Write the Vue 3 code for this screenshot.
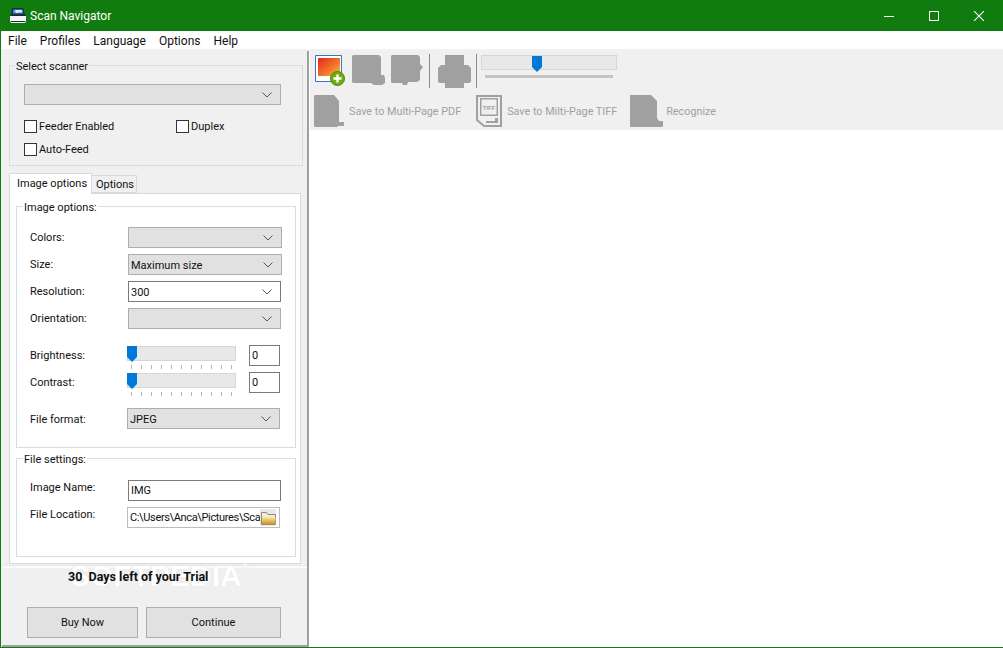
<script setup>
const menus = ['File', 'Profiles', 'Language', 'Options', 'Help']
const selects = [
  { label: 'Colors:', value: '', width: 154, active: false },
  { label: 'Size:', value: 'Maximum size', width: 154, active: false },
  { label: 'Resolution:', value: '300', width: 153, active: true },
  { label: 'Orientation:', value: '', width: 153, active: false }
]
const sliders = ['Brightness:', 'Contrast:']
const ticks = Array.from({ length: 11 }, (_, i) => i)
</script>

<template>
  <div class="window">
    <header class="titlebar">
      <svg class="appicon" width="16" height="15" viewBox="0 0 16 15">
        <path d="M2 0h11l2 7H1z" fill="#12304f" />
        <path d="M3.500 1.500h8.500l1 4H3z" fill="#5f97cc" />
        <path d="M5 2h7l.5 2L6 5z" fill="#d9ecfa" />
        <path d="M0 8h16v5l-1 2H1l-1-2z" fill="#f4f5f6" />
        <path d="M1 13h14v1H1z" fill="#1b2a3a" />
        <path d="M0 7h16v1H0z" fill="#1b2a3a" />
      </svg>
      <span class="apptitle">Scan Navigator</span>
      <div class="winctl">
        <svg width="10" height="10" viewBox="0 0 10 10"><path d="M0 5.500h10" stroke="#fff" /></svg>
        <svg width="10" height="10" viewBox="0 0 10 10"><path d="M.5.500h9v9h-9z" fill="none" stroke="#fff" /></svg>
        <svg width="10" height="10" viewBox="0 0 10 10"><path d="M0 0l10 10M10 0L0 10" stroke="#fff" stroke-width="1.100" /></svg>
      </div>
    </header>

    <nav class="menubar">
      <span v-for="m in menus" :key="m" class="menuitem">{{ m }}</span>
    </nav>

    <div class="body">
      <aside class="side">
        <div class="upper">
          <section class="group scanner">
            <span class="legend">Select scanner</span>
            <div class="select scanner-select">
              <span></span>
              <svg class="chev" width="10" height="6" viewBox="0 0 10 6"><path d="M.5.500L5 5 9.500.500" fill="none" stroke="#555" /></svg>
            </div>
            <div class="checks">
              <label class="check check-feeder"><i></i><span>Feeder Enabled</span></label>
              <label class="check"><i></i><span>Duplex</span></label>
            </div>
            <label class="check check-auto"><i></i><span>Auto-Feed</span></label>
          </section>

          <div class="tabs">
            <span class="tab on">Image options</span>
            <span class="tab">Options</span>
          </div>
          <div class="tabpanel">
            <section class="group image-group">
              <span class="legend">Image options:</span>
              <div v-for="s in selects" :key="s.label" class="row">
                <span class="lbl">{{ s.label }}</span>
                <div class="select" :class="{ live: s.active }" :style="{ width: s.width + 'px' }">
                  <span>{{ s.value }}</span>
                  <svg class="chev" width="10" height="6" viewBox="0 0 10 6"><path d="M.5.500L5 5 9.500.500" fill="none" stroke="#555" /></svg>
                </div>
              </div>

              <div class="sliders">
                <div v-for="s in sliders" :key="s" class="row">
                  <span class="lbl">{{ s }}</span>
                  <div class="slider">
                    <div class="track"></div>
                    <svg class="thumb" width="10" height="16" viewBox="0 0 10 16"><path d="M0 0h10v11l-5 5-5-5z" fill="#0078d7" /></svg>
                    <div class="ticks"><b v-for="t in ticks" :key="t"></b></div>
                  </div>
                  <div class="field num">0</div>
                </div>
              </div>

              <div class="row format">
                <span class="lbl">File format:</span>
                <div class="select nudge format-select">
                  <span>JPEG</span>
                  <svg class="chev" width="10" height="6" viewBox="0 0 10 6"><path d="M.5.500L5 5 9.500.500" fill="none" stroke="#555" /></svg>
                </div>
              </div>
            </section>

            <section class="group file-group">
              <span class="legend">File settings:</span>
              <div class="row">
                <span class="lbl">Image Name:</span>
                <div class="field name">IMG</div>
              </div>
              <div class="row">
                <span class="lbl">File Location:</span>
                <div class="field location nudge">
                  <span class="path">C:\Users\Anca\Pictures\Sca</span>
                  <span class="folderbtn">
                    <svg width="15" height="14" viewBox="0 0 15 14">
                      <defs>
                        <linearGradient id="fold" x1="0" y1="0" x2="0" y2="1">
                          <stop offset="0" stop-color="#fbe9a8" />
                          <stop offset="1" stop-color="#c98f1c" />
                        </linearGradient>
                      </defs>
                      <path d="M.5 1.500h5l1.500 2h7.500v10H.5z" fill="#f3eccd" stroke="#8b8b7a" />
                      <path d="M1 6h13.500v7.500H1z" fill="url(#fold)" />
                    </svg>
                  </span>
                </div>
              </div>
            </section>
          </div>
        </div>

        <div class="footer">
          <p class="trial">30&nbsp; Days left of your Trial</p>
          <div class="buttons">
            <span class="btn buy">Buy Now</span>
            <span class="btn cont">Continue</span>
          </div>
        </div>
      </aside>

      <main class="main">
        <div class="toolbar">
          <div class="tool-top">
            <svg class="newscan" width="30" height="31" viewBox="0 0 30 31">
              <defs>
                <linearGradient id="pic" x1="0" y1="0" x2="1" y2="1">
                  <stop offset="0" stop-color="#e6231e" />
                  <stop offset=".6" stop-color="#f27a2b" />
                  <stop offset="1" stop-color="#f9c24d" />
                </linearGradient>
              </defs>
              <path d="M.5.500h26v26H.5z" fill="#fff" stroke="#3a78b5" />
              <path d="M3 3h22v18H3z" fill="url(#pic)" />
              <circle cx="22.500" cy="23.500" r="7" fill="#6fae12" stroke="#4a850a" />
              <path d="M22.500 19.500v8M18.500 23.500h8" stroke="#fff" stroke-width="2.400" />
            </svg>
            <svg class="sil" width="33" height="31" viewBox="0 0 33 31"><path d="M1 0h26l2 2v18h3l1 3v5l-3 2h-8l-3-2H1l-1-1V1z" fill="#a0a0a0" /></svg>
            <svg class="sil s3" width="33" height="32" viewBox="0 0 33 32"><path d="M1 0h26l2 2v7l3 3-3 4v9l-3 2h-9l-1 3h-4l-1-2H1l-1-1V1z" fill="#a0a0a0" /></svg>
            <i class="sep"></i>
            <svg class="sil s4" width="33" height="33" viewBox="0 0 33 33"><path d="M7 0h19v10h4l3 3v14l-2 1h-5v5H7v-5H2l-2-1V13l3-3h4z" fill="#a0a0a0" /></svg>
            <i class="sep s5"></i>
            <div class="zoom">
              <div class="ztrack">
                <svg class="zthumb" width="10" height="16" viewBox="0 0 10 16"><path d="M0 0h10v11l-5 5-5-5z" fill="#0078d7" /></svg>
              </div>
              <div class="zbar"></div>
            </div>
          </div>
          <div class="tool-bottom">
            <span class="act a1">
              <svg width="30" height="32" viewBox="0 0 30 32"><path d="M1 0h19l5 6v21h5v4h-6l-1 1H1l-1-1V1z" fill="#a0a0a0" /></svg>
              <span class="acttxt">Save to Multi-Page PDF</span>
            </span>
            <span class="act a2">
              <svg width="26" height="32" viewBox="0 0 26 32">
                <path d="M1 1h24v30H8l-7-6z" fill="none" stroke="#a0a0a0" stroke-width="2" />
                <path d="M4.750 3.750h16.500v16.500H4.750z" fill="none" stroke="#a0a0a0" stroke-width="1.500" />
                <text x="13" y="14.500" text-anchor="middle" class="tifftxt">TIFF</text>
                <path d="M10 26h12v2H10z" fill="#a0a0a0" />
                <path d="M19 23h3v3h-3z" fill="#a0a0a0" />
              </svg>
              <span class="acttxt">Save to Milti-Page TIFF</span>
            </span>
            <span class="act a3">
              <svg width="33" height="32" viewBox="0 0 33 32"><path d="M0 0h21l6 6v17l2 3h4v5l-1 1H0z" fill="#a0a0a0" /></svg>
              <span class="acttxt">Recognize</span>
            </span>
          </div>
        </div>
      </main>
    </div>

    <span class="watermark">SOFTPEDIA<sup>®</sup></span>
  </div>
</template>

<style>
html, body { margin: 0; padding: 0; background: #fff; }
</style>

<style scoped>
* { box-sizing: border-box; }
.window {
  position: relative;
  width: 1003px;
  height: 648px;
  overflow: hidden;
  display: flex;
  flex-direction: column;
  background: #fff;
  border-left: 1px solid #107c10;
  border-bottom: 1px solid #107c10;
  font: 11px/16px Roboto, "Noto Sans", sans-serif;
  color: #111;
}
.titlebar {
  height: 31px;
  flex: none;
  margin-left: -1px;
  background: #107c10;
  color: #fff;
  display: flex;
  align-items: center;
  padding-left: 10px;
}
.appicon { margin-right: 4px; }
.apptitle { font-size: 12px; }
.winctl { margin-left: auto; display: flex; gap: 35px; padding-right: 19px; }
.menubar {
  height: 18px;
  flex: none;
  background: #fff;
  display: flex;
  padding: 2px 0 0 7px;
  align-items: center;
  gap: 13px;
  font-size: 12px;
}
.body { flex: 1; display: flex; min-height: 0; border-top: 2px solid #f2f2f2; }
.side {
  width: 308px;
  flex: none;
  background: #f0f0f0;
  border-right: 2px solid #a0a0a0;
  display: flex;
  flex-direction: column;
}
.upper { flex: 1; padding: 14px 4px 0 8px; min-height: 0; }
.group { position: relative; border: 1px solid #dcdcdc; }
.legend {
  position: absolute;
  top: -7px;
  left: 6px;
  padding: 0 1px;
  background: inherit;
  white-space: nowrap;
}
.scanner { height: 101px; width: 294px; padding: 18px 0 0 14px; background: #f0f0f0; }
.scanner .legend { left: 5px; }
.select {
  height: 21px;
  display: flex;
  align-items: center;
  justify-content: space-between;
  padding: 0 8px 0 2px;
  background: #e1e1e1;
  border: 1px solid #adadad;
  flex: none;
}
.select > span { padding-top: 2px; }
.select.live { background: #fff; border-color: #7a7a7a; }
.scanner-select { width: 257px; }
.checks { display: flex; margin-top: 14px; }
.check { display: flex; align-items: center; height: 14px; white-space: nowrap; }
.check span { padding-top: 2px; }
.check i {
  width: 13px;
  height: 13px;
  border: 1px solid #333;
  background: #fff;
  margin-right: 2px;
  flex: none;
}
.check-feeder { width: 152px; }
.check-auto { margin-top: 9px; }

.tabs { display: flex; align-items: flex-end; margin-top: 7px; height: 20px; }
.tab {
  height: 18px;
  padding: 1px 4px 0;
  border: 1px solid #d9d9d9;
  border-left: 0;
  background: #f0f0f0;
  width: 45px;
  white-space: nowrap;
}
.tab.on {
  width: 83px;
  height: 21px;
  padding: 2px 0 0 7px;
  margin: 0 0 -1px;
  background: #fff;
  border: 1px solid #d9d9d9;
  border-bottom: 0;
  position: relative;
  z-index: 1;
}
.tabpanel {
  width: 292px;
  height: 371px;
  background: #fff;
  border: 1px solid #d9d9d9;
  padding: 12px 0 0 6px;
}
.image-group { width: 280px; height: 242px; padding: 20px 0 0 13px; background: #fff; }
.file-group { width: 280px; height: 99px; margin-top: 10px; padding: 21px 0 0 13px; background: #fff; }
.row { display: flex; align-items: center; height: 21px; margin-bottom: 6px; }
.lbl { width: 98px; flex: none; }
.format .lbl { padding-top: 2px; }
.file-group .lbl { padding-bottom: 6px; }
.sliders { margin-top: 16px; }
.nudge { margin-left: -1px; }
.slider { position: relative; width: 109px; height: 21px; margin-left: -1px; flex: none; }
.track {
  position: absolute;
  top: 1px;
  left: 0;
  right: 0;
  height: 15px;
  background: #e6e9e8;
  border: 1px solid #d6d6d6;
}
.thumb { position: absolute; top: 1px; left: 0; }
.ticks {
  position: absolute;
  top: 20px;
  left: 4px;
  width: 101px;
  display: flex;
  justify-content: space-between;
}
.ticks b { width: 1px; height: 4px; background: #b5b5b5; }
.field {
  height: 21px;
  background: #fff;
  border: 1px solid #7a7a7a;
  display: flex;
  align-items: center;
  padding-left: 2px;
  flex: none;
}
.num { width: 31px; margin-left: 13px; }
.format { margin-top: 15px; }
.format-select { width: 153px; }
.name { width: 153px; }
.location { width: 153px; border-color: #bdbdbd; padding-right: 3px; overflow: hidden; }
.path { flex: 1; overflow: hidden; white-space: nowrap; min-width: 0; letter-spacing: -.35px; }
.folderbtn { width: 16px; height: 17px; display: flex; align-items: center; justify-content: center; background: #e8e8e8; flex: none; }

.footer {
  height: 81px;
  flex: none;
  border-top: 2px solid #fafafa;
  background: #f0f0f0;
  margin-left: 1px;
  box-shadow: 0 -1px 0 #e8e8e8;
  border-bottom: 2px solid #a0a0a0;
}
.trial { margin: 1px 0 0 66px; font-size: 12.500px; font-weight: 700; color: #111; position: relative; z-index: 2; }
.buttons { display: flex; gap: 8px; padding-left: 25px; margin-top: 22px; }
.btn {
  height: 31px;
  display: flex;
  align-items: center;
  justify-content: center;
  background: #e1e1e1;
  border: 1px solid #adadad;
}
.buy { width: 111px; }
.cont { width: 135px; }

.main { flex: 1; background: #fff; min-width: 0; }
.toolbar { height: 79px; margin: 0 0 0 1px; background: #f0f0f0; padding: 3px 0 0 5px; color: #a0a0a0; }
.tool-top { display: flex; align-items: flex-start; height: 36px; }
.newscan { margin-top: 1px; margin-right: 7px; flex: none; }
.sil { margin-top: 1px; flex: none; }
.s3 { margin-left: 6px; }
.sep { width: 1px; height: 34px; background: #8c8c8c; margin: 0 0 0 5px; flex: none; }
.s4 { margin-left: 8px; }
.s5 { margin-left: 5px; }
.zoom { margin-left: 4px; width: 136px; }
.ztrack { position: relative; height: 15px; margin-top: 1px; background: #e6e9e8; border: 1px solid #d6d6d6; }
.zthumb { position: absolute; top: 0; left: 50px; }
.zbar { height: 3px; margin: 5px 4px 0; background: #c4c4c4; }
.tool-bottom { display: flex; margin: 5px 0 0 -1px; }
.act { display: flex; align-items: center; white-space: nowrap; font-size: 10.800px; }
.act svg { margin-right: 5px; flex: none; }
.acttxt { padding-top: 2px; }
.a2 { margin-left: 15px; }
.a3 { margin-left: 13px; }
.a3 svg { margin-right: 3px; }
.tifftxt { font: 700 6px "Liberation Sans", sans-serif; fill: #a0a0a0; }

.watermark {
  position: absolute;
  left: 69px;
  top: 560px;
  font: 700 30px/32px "Liberation Sans", sans-serif;
  color: #fff;
  text-shadow: 0 0 1px rgba(205, 205, 205, .8);
  pointer-events: none;
}
.watermark sup { font-size: 9px; vertical-align: top; line-height: 14px; }
</style>
